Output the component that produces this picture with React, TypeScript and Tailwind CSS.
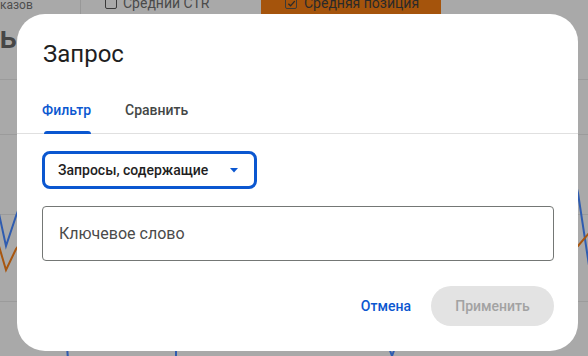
import React from 'react';

const font = { fontFamily: 'Roboto, "Noto Sans", sans-serif' };

function Checkbox({ checked }: { checked?: boolean }) {
  return (
    <span className="w-[12px] h-[12px] border-[1.5px] border-[#3a3a3a] rounded-[2px] flex items-center justify-center shrink-0">
      {checked && (
        <svg width="9" height="9" viewBox="0 0 10 10">
          <path d="M1.5 5.2 L4 7.6 L8.6 2.4" fill="none" stroke="#2a2a2a" strokeWidth="1.5" />
        </svg>
      )}
    </span>
  );
}

function Background() {
  return (
    <div className="w-[588px] h-[356px] bg-[#a9a9a9] overflow-hidden relative">
      {/* metric cards, cut off at the top */}
      <div className="flex h-[14px] overflow-hidden">
        <div className="w-[81px] border-r border-[#989898] flex items-end">
          <span className="text-[12px] leading-4 text-[#4e4e4e] mb-[1px]">казов</span>
        </div>
        <div className="w-[180px] pl-[24px] flex items-end">
          <div className="flex items-center gap-[6px] mb-[1px]">
            <Checkbox />
            <span className="text-[14px] leading-5 text-[#4a4a4a]">Средний CTR</span>
          </div>
        </div>
        <div className="w-[180px] bg-[#a5540c] pl-[24px] flex items-end">
          <div className="flex items-center gap-[7px] mb-[1px]">
            <Checkbox checked />
            <span className="text-[14px] leading-5 text-[#2a2a2a]">Средняя позиция</span>
          </div>
        </div>
      </div>
      <div className="h-[66px] border-b border-[#9b9b9b] pt-[3px]">
        <div className="w-[17px] overflow-hidden flex justify-end">
          <span className="text-[32px] leading-10 font-medium text-[#464646] whitespace-nowrap">ть</span>
        </div>
      </div>
      <div className="h-[55px] border-b border-[#9b9b9b]" />
      <div className="h-[80px] border-b border-[#9b9b9b]" />
      <div className="h-[87px] border-b border-[#9b9b9b]" />
      <svg className="absolute inset-0" width="588" height="356" viewBox="0 0 588 356">
        <polyline points="-4,200 6,246 16,216 26,190" fill="none" stroke="#2f5cb0" strokeWidth="2" />
        <polyline points="-4,236 6,270 16,249 26,236" fill="none" stroke="#a8560f" strokeWidth="2" />
        <polyline points="570,160 578,193 590,272" fill="none" stroke="#2f5cb0" strokeWidth="2" />
        <polyline points="570,252 578,246 590,232" fill="none" stroke="#a8560f" strokeWidth="2" />
        <line x1="67" y1="345" x2="68" y2="360" stroke="#2f5cb0" strokeWidth="2" />
        <line x1="176" y1="345" x2="176" y2="360" stroke="#2f5cb0" strokeWidth="2" />
        <polyline points="388,345 392,356 396,345" fill="none" stroke="#2f5cb0" strokeWidth="2" />
      </svg>
    </div>
  );
}

export default function App() {
  return (
    <div className="relative w-[588px] h-[356px] overflow-hidden" style={font}>
      <Background />
      <div className="absolute left-[17px] top-[14px] w-[561px] h-[337px] bg-white rounded-[28px] flex flex-col">
        <div className="pl-[26px] pr-6 pt-6">
          <h2 className="text-[24px] leading-8 font-normal text-[#1f1f1f]">Запрос</h2>
        </div>
        <div className="mt-4 flex gap-[34px] pl-[25px] pr-6 h-12 border-b border-[#e0e0e0]">
          <div className="relative flex items-center h-12">
            <span className="text-[14px] leading-5 font-medium text-[#0b57d0]">Фильтр</span>
            <span className="absolute left-[2px] right-0 bottom-0 h-[3px] bg-[#0b57d0] rounded-t-[3px]" />
          </div>
          <div className="flex items-center h-12">
            <span className="text-[14px] leading-5 font-medium text-[#444746]">Сравнить</span>
          </div>
        </div>
        <div className="pl-[25px] pr-6 pt-[17px] flex flex-col">
          <div className="w-[215px] h-[38px] border-[3px] border-[#0b57d0] rounded-[8px] flex items-center justify-between pl-[13px] pr-[15px]">
            <span className="text-[14px] leading-5 font-medium text-[#1f1f1f]">Запросы, содержащие</span>
            <svg width="10" height="5" viewBox="0 0 10 5">
              <path d="M1 0 L9 0 L5 4.5 Z" fill="#0b57d0" />
            </svg>
          </div>
          <div className="mt-[17px] h-[55px] border border-[#747775] rounded-[4px] flex items-center px-4">
            <span className="text-[16px] leading-6 text-[#4a4a4a]">Ключевое слово</span>
          </div>
          <div className="mt-[25px] flex justify-end items-center gap-2">
            <button className="h-10 px-3 text-[14px] font-medium text-[#0b57d0]">Отмена</button>
            <button className="h-10 w-[123px] rounded-full bg-[#e3e3e3] text-[14px] font-medium text-[#a2a2a2]">Применить</button>
          </div>
        </div>
      </div>
    </div>
  );
}
